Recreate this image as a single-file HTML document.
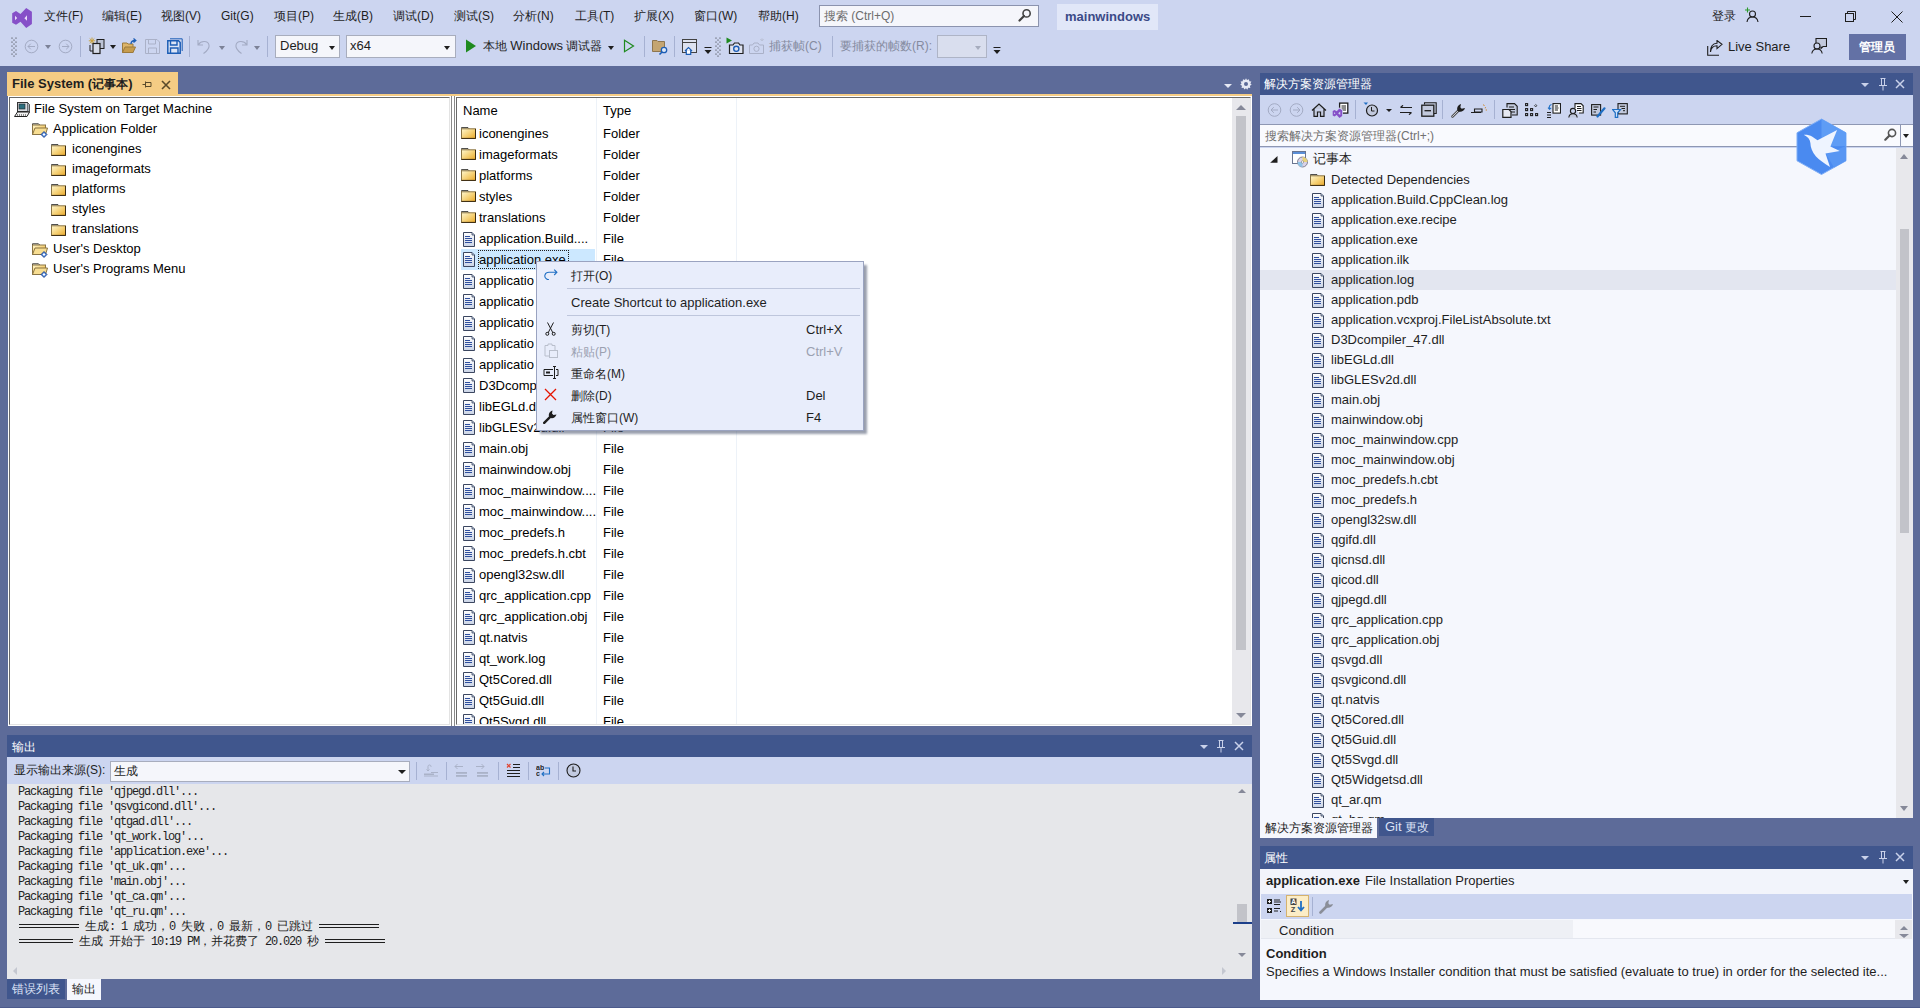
<!DOCTYPE html>
<html><head><meta charset="utf-8">
<style>
*{margin:0;padding:0;box-sizing:border-box}
html,body{width:1920px;height:1008px;overflow:hidden;background:#5D6B99;font-family:"Liberation Sans",sans-serif;font-size:13px;color:#1E1E1E}
.a{position:absolute}
.t{position:absolute;white-space:nowrap;line-height:16px}
#top{left:0;top:0;width:1920px;height:66px;background:#CCD5F0}
.menu{top:8px;font-size:12px;color:#1E1E1E}
.sep{position:absolute;width:1px;background:#A6B1D2;top:37px;height:20px}
.combo{position:absolute;background:#F5F6FB;border:1px solid #A8ADBD}
.dd{position:absolute;width:0;height:0;border-left:4px solid transparent;border-right:4px solid transparent;border-top:4px solid #1E1E1E}
.ttl{position:absolute;background:#40568D;color:#fff}
.tb{position:absolute;background:#CCD5F0}
.sunk{position:absolute;background:#fff;border:1px solid #fff}
.sunk>.in{color:#000;position:absolute;left:0;top:0;right:0;bottom:0;border-top:1px solid #696969;border-left:1px solid #696969;border-right:1px solid #E3E3E3;border-bottom:1px solid #E3E3E3;overflow:hidden}
.sb{position:absolute;background:#E8E8EC}
.thumb{position:absolute;background:#C2C3C9}
.upar{position:absolute;width:0;height:0;border-left:5px solid transparent;border-right:5px solid transparent;border-bottom:5px solid #868999}
.dnar{position:absolute;width:0;height:0;border-left:5px solid transparent;border-right:5px solid transparent;border-top:5px solid #868999}
.row{position:absolute;height:21px;white-space:nowrap}
.mono{font-family:"Liberation Mono",monospace;font-size:12px;letter-spacing:-1.2px;line-height:15px;color:#1E1E1E}
.fi{position:absolute;width:13px;height:16px}
</style></head><body>
<svg width="0" height="0" style="position:absolute"><defs>
<linearGradient id="gf" x1="0" y1="0" x2="1" y2="1"><stop offset="0" stop-color="#FFF8D0"/><stop offset=".55" stop-color="#F5CF72"/><stop offset="1" stop-color="#E9A82A"/></linearGradient>
<linearGradient id="gd" x1="0" y1="0" x2="0" y2="1"><stop offset="0" stop-color="#FFFFFF"/><stop offset="1" stop-color="#C9D3E6"/></linearGradient>
<symbol id="ifile" viewBox="0 0 12 15"><path d="M0.5 0.5 H9 L11.5 3 V14.5 H0.5 Z" fill="url(#gd)" stroke="#3B4660"/><path d="M9 0.5 V3 H11.5" fill="#B7C3DA" stroke="#3B4660" stroke-width=".8"/><g fill="#2F4F9E"><rect x="2" y="4" width="5" height="1"/><rect x="2" y="6" width="7" height="1"/><rect x="2" y="8" width="7" height="1"/><rect x="2" y="10" width="7" height="1"/></g></symbol>
<symbol id="ifold" viewBox="0 0 15 12"><path d="M0.5 1.8 V0.6 H7 L8.2 1.8" fill="#F1EDD8" stroke="#2A2A2A" stroke-width=".9"/><rect x="0.5" y="1.8" width="14" height="9.7" fill="url(#gf)" stroke="#8A7444"/><path d="M0.5 11.4 H14.5 V2" fill="none" stroke="#3A2A10" stroke-width="1"/></symbol>
<symbol id="isfold" viewBox="0 0 17 15"><path d="M0.5 2 V0.8 H6.5 L7.7 2" fill="#F1EDD8" stroke="#2A2A2A" stroke-width=".9"/><rect x="0.5" y="2" width="13" height="9.5" fill="url(#gf)" stroke="#8A7444"/><path d="M0.5 11.5 L3 5 H15.5 L13.5 11.5 Z" fill="#F8DE92" stroke="#8A7444"/><path d="M12 8.5 L15 11.5 L12 14.5 L9 11.5 Z" fill="#3D7BD8" stroke="#1E3F86" stroke-width=".8"/><path d="M12 10 L13.5 11.5 L12 13 L10.5 11.5 Z" fill="#fff"/></symbol>
</defs></svg>
<!-- TOP BARS -->
<div id="top" class="a">
 <svg class="a" style="left:12px;top:8px" width="20" height="20" viewBox="0 0 20 20"><path d="M0.2 5.2 L4 3.1 L8.5 6 L14.2 0 L19.9 3.8 L19.9 16 L14.2 19.9 L8.5 13.8 L4 16.7 L0.2 14.8 Z" fill="#8650C8"/><path d="M3 7.8 L5.2 10 L3 12.2 Z" fill="#EBDDFB"/><path d="M15 7.2 L12.4 10.2 L15 12.7 Z" fill="#EBDDFB"/></svg>
 <div class="t menu" style="left:44px">文件(F)</div>
 <div class="t menu" style="left:102px">编辑(E)</div>
 <div class="t menu" style="left:161px">视图(V)</div>
 <div class="t menu" style="left:221px">Git(G)</div>
 <div class="t menu" style="left:274px">项目(P)</div>
 <div class="t menu" style="left:333px">生成(B)</div>
 <div class="t menu" style="left:393px">调试(D)</div>
 <div class="t menu" style="left:454px">测试(S)</div>
 <div class="t menu" style="left:513px">分析(N)</div>
 <div class="t menu" style="left:575px">工具(T)</div>
 <div class="t menu" style="left:634px">扩展(X)</div>
 <div class="t menu" style="left:694px">窗口(W)</div>
 <div class="t menu" style="left:758px">帮助(H)</div>
 <div class="a" style="left:819px;top:5px;width:220px;height:22px;background:#F5F6FB;border:1px solid #8B93AE"></div>
 <div class="t" style="left:824px;top:8px;color:#6D6D6D;font-size:12px">搜索 (Ctrl+Q)</div>
 <svg class="a" style="left:1018px;top:8px" width="14" height="14" viewBox="0 0 14 14"><circle cx="8.6" cy="5.4" r="3.6" fill="none" stroke="#424242" stroke-width="1.6"/><path d="M6 8 L1.5 12.5" stroke="#424242" stroke-width="2.2" stroke-linecap="round"/></svg>
 <div class="a" style="left:1057px;top:4px;width:101px;height:26px;background:#E1E7F8"></div>
 <div class="t" style="left:1065px;top:9px;font-weight:bold;color:#3B4A87;font-size:13px">mainwindows</div>
 <div class="t" style="left:1712px;top:8px;font-size:12px">登录</div>
 <svg class="a" style="left:1744px;top:7px" width="16" height="16" viewBox="0 0 16 16"><path d="M3.5 0.5 V5.5 M1 3 H6" stroke="#2B9A2B" stroke-width="1.1"/><circle cx="8.5" cy="7" r="3" fill="none" stroke="#1E1E1E" stroke-width="1.1"/><path d="M3 15 C3.5 11.5 5.5 10 8.5 10 C11.5 10 13.5 11.5 14 15" fill="none" stroke="#1E1E1E" stroke-width="1.1"/></svg>
 <div class="a" style="left:1800px;top:16px;width:11px;height:1px;background:#1E1E1E"></div>
 <svg class="a" style="left:1845px;top:11px" width="12" height="12" viewBox="0 0 12 12"><rect x="0.5" y="2.5" width="8" height="8" fill="none" stroke="#1E1E1E"/><path d="M2.5 2.5 V0.5 H10.5 V8.5 H8.5" fill="none" stroke="#1E1E1E"/></svg>
 <svg class="a" style="left:1891px;top:11px" width="12" height="12" viewBox="0 0 12 12"><path d="M0.5 0.5 L11.5 11.5 M11.5 0.5 L0.5 11.5" stroke="#1E1E1E" stroke-width="1"/></svg>

 <svg class="a" style="left:11px;top:37px" width="6" height="20" viewBox="0 0 6 20"><g fill="#1E1E1E"><circle cx="1" cy="1" r=".6"/><circle cx="5" cy="1" r=".6"/><circle cx="3" cy="3" r=".6"/><circle cx="1" cy="5" r=".6"/><circle cx="5" cy="5" r=".6"/><circle cx="3" cy="7" r=".6"/><circle cx="1" cy="9" r=".6"/><circle cx="5" cy="9" r=".6"/><circle cx="3" cy="11" r=".6"/><circle cx="1" cy="13" r=".6"/><circle cx="5" cy="13" r=".6"/><circle cx="3" cy="15" r=".6"/><circle cx="1" cy="17" r=".6"/><circle cx="5" cy="17" r=".6"/><circle cx="3" cy="19" r=".6"/></g></svg>
 <svg class="a" style="left:24px;top:39px" width="15" height="15" viewBox="0 0 15 15"><circle cx="7.5" cy="7.5" r="6.3" fill="none" stroke="#A3ABC4" stroke-width="1"/><path d="M11 7.5 H4 M6.8 4.7 L4 7.5 L6.8 10.3" fill="none" stroke="#A3ABC4" stroke-width="1"/></svg>
 <div class="dd" style="left:45px;top:45px;border-top-color:#7C8297;border-left-width:3.5px;border-right-width:3.5px"></div>
 <svg class="a" style="left:58px;top:39px" width="15" height="15" viewBox="0 0 15 15"><circle cx="7.5" cy="7.5" r="6.3" fill="none" stroke="#A3ABC4" stroke-width="1"/><path d="M4 7.5 H11 M8.2 4.7 L11 7.5 L8.2 10.3" fill="none" stroke="#A3ABC4" stroke-width="1"/></svg>
 <div class="sep" style="left:80px;top:36px;height:21px"></div>
 <svg class="a" style="left:88px;top:37px" width="18" height="18" viewBox="0 0 18 18"><g stroke="#C8A13E" stroke-width="1"><path d="M4 0.5 V7 M0.8 3.8 H7.2 M1.7 1.5 L6.3 6.1 M6.3 1.5 L1.7 6.1"/></g><rect x="9" y="2.5" width="7" height="9" fill="#BCC3D6" stroke="#1E1E1E" stroke-width="1"/><rect x="5" y="6.5" width="7" height="10" fill="#D6DBE8" stroke="#1E1E1E" stroke-width="1.2"/><path d="M2 8 V14 H5" fill="none" stroke="#1E1E1E"/></svg>
 <div class="dd" style="left:110px;top:45px;border-left-width:3.5px;border-right-width:3.5px"></div>
 <svg class="a" style="left:122px;top:38px" width="17" height="16" viewBox="0 0 17 16"><path d="M0.5 5 H5 L6 6 H11 V14.5 H0.5 Z" fill="#DDB469" stroke="#9C7A3C"/><path d="M0.5 14.5 L3 9 H13.5 L11 14.5 Z" fill="#C69C4E" stroke="#9C7A3C"/><path d="M9 6 C9 3.5 10.5 2.5 13 2.5 M11.5 0.5 L13.8 2.5 L11.5 4.5" fill="none" stroke="#1C5DB5" stroke-width="1.3"/></svg>
 <svg class="a" style="left:145px;top:39px" width="15" height="15" viewBox="0 0 15 15"><path d="M0.5 0.5 H12 L14.5 3 V14.5 H0.5 Z" fill="none" stroke="#AAB1C8"/><path d="M3.5 0.5 V5 H10.5 V0.5 M3.5 14.5 V9 H11.5 V14.5" fill="none" stroke="#AAB1C8"/></svg>
 <svg class="a" style="left:167px;top:38px" width="16" height="16" viewBox="0 0 16 16"><path d="M3 0.8 H15.2 V13" fill="none" stroke="#1C5DB5" stroke-width="1"/><path d="M0.8 2.8 H11.5 L13.2 4.5 V15.2 H0.8 Z" fill="#DCE5F6" stroke="#1C5DB5" stroke-width="1.5"/><path d="M3.5 2.8 V7 H10 V2.8 M3.5 15 V10 H11 V15" fill="none" stroke="#1C5DB5" stroke-width="1.4"/></svg>
 <div class="sep" style="left:189px;top:36px;height:21px"></div>
 <svg class="a" style="left:197px;top:39px" width="16" height="16" viewBox="0 0 16 16"><path d="M1 1 V6 H6 M1.5 5.5 C4 1.5 11 1.5 12 6 C12.8 9.5 10 12 6.5 14.5" fill="none" stroke="#A3ABC4" stroke-width="1.1"/></svg>
 <div class="dd" style="left:219px;top:46px;border-top-color:#7C8297;border-left-width:3.5px;border-right-width:3.5px"></div>
 <svg class="a" style="left:232px;top:39px" width="16" height="16" viewBox="0 0 16 16"><path d="M15 1 V6 H10 M14.5 5.5 C12 1.5 5 1.5 4 6 C3.2 9.5 6 12 9.5 14.5" fill="none" stroke="#A3ABC4" stroke-width="1.1"/></svg>
 <div class="dd" style="left:254px;top:46px;border-top-color:#7C8297;border-left-width:3.5px;border-right-width:3.5px"></div>
 <div class="sep" style="left:267px;top:36px;height:21px"></div>
 <div class="combo" style="left:275px;top:35px;width:65px;height:23px"></div>
 <div class="t" style="left:280px;top:38px;font-size:13px">Debug</div>
 <div class="dd" style="left:329px;top:46px;border-left-width:3.5px;border-right-width:3.5px"></div>
 <div class="combo" style="left:346px;top:35px;width:110px;height:23px"></div>
 <div class="t" style="left:350px;top:38px;font-size:13px">x64</div>
 <div class="dd" style="left:444px;top:46px;border-left-width:3.5px;border-right-width:3.5px"></div>
 <svg class="a" style="left:465px;top:39px" width="12" height="14" viewBox="0 0 12 14"><path d="M1 0.5 L11 7 L1 13.5 Z" fill="#1E8A1E"/></svg>
 <div class="t" style="left:483px;top:38px;font-size:12px">本地 <span style="font-size:13px">Windows</span> 调试器</div>
 <div class="dd" style="left:608px;top:46px;border-left-width:3.5px;border-right-width:3.5px"></div>
 <svg class="a" style="left:623px;top:39px" width="12" height="14" viewBox="0 0 12 14"><path d="M1.5 1.3 L10.5 7 L1.5 12.7 Z" fill="none" stroke="#1E8A1E" stroke-width="1.2"/></svg>
 <div class="sep" style="left:644px;top:36px;height:21px"></div>
 <svg class="a" style="left:652px;top:39px" width="17" height="16" viewBox="0 0 17 16"><path d="M0.5 1.5 H5 L6 2.5 H12.5 V12.5 H0.5 Z" fill="#C4A572" stroke="#8E7650"/><circle cx="12" cy="11" r="2.7" fill="#DCE8F8" stroke="#1C5DB5" stroke-width="1.3"/><path d="M10 13 L7.5 15.5" stroke="#1C5DB5" stroke-width="1.6"/></svg>
 <div class="sep" style="left:674px;top:36px;height:21px"></div>
 <svg class="a" style="left:682px;top:39px" width="16" height="16" viewBox="0 0 16 16"><rect x="0.5" y="0.5" width="14" height="13" fill="#DDE2F0" stroke="#424242"/><path d="M0.5 3.5 H14.5" stroke="#424242"/><path d="M3 12 L6.5 8.5 L10 12 M4.3 11 V15.3 H8.7 V11" fill="#fff" stroke="#1C5DB5" stroke-width="1.2"/></svg>
 <svg class="a" style="left:704px;top:47px" width="8" height="8" viewBox="0 0 8 8"><path d="M0.5 0.5 H7.5" stroke="#1E1E1E"/><path d="M0.5 3 H7.5 L4 7 Z" fill="#1E1E1E"/></svg>
 <svg class="a" style="left:715px;top:37px" width="6" height="20" viewBox="0 0 6 20"><g fill="#1E1E1E"><circle cx="1" cy="1" r=".6"/><circle cx="5" cy="1" r=".6"/><circle cx="3" cy="3" r=".6"/><circle cx="1" cy="5" r=".6"/><circle cx="5" cy="5" r=".6"/><circle cx="3" cy="7" r=".6"/><circle cx="1" cy="9" r=".6"/><circle cx="5" cy="9" r=".6"/><circle cx="3" cy="11" r=".6"/><circle cx="1" cy="13" r=".6"/><circle cx="5" cy="13" r=".6"/><circle cx="3" cy="15" r=".6"/><circle cx="1" cy="17" r=".6"/><circle cx="5" cy="17" r=".6"/><circle cx="3" cy="19" r=".6"/></g></svg>
 <svg class="a" style="left:726px;top:37px" width="18" height="18" viewBox="0 0 18 18"><path d="M0.5 0.5 L6 3.5 L0.5 6.5 Z" fill="#1E8A1E"/><path d="M3.5 8 H7 L8.5 6 H12.5 L14 8 H17 V16.5 H3.5 Z" fill="#DDE2F0" stroke="#1E1E1E" stroke-width="1.2"/><circle cx="10.3" cy="11.8" r="2.6" fill="none" stroke="#1C5DB5" stroke-width="1.4"/></svg>
 <svg class="a" style="left:749px;top:38px" width="16" height="17" viewBox="0 0 16 17"><path d="M13 0.5 V3 M11.5 1.5 L12.2 2.3 M14.5 1.5 L13.8 2.3" stroke="#B2B8CA"/><path d="M0.5 7 H3.5 L5 5 H9 L10.5 7 H14.5 V15.5 H0.5 Z" fill="none" stroke="#AAB1C8"/><circle cx="7.5" cy="10.8" r="2.6" fill="none" stroke="#AAB1C8"/></svg>
 <div class="t" style="left:769px;top:38px;font-size:12px;color:#858B9F">捕获帧(C)</div>
 <div class="sep" style="left:832px;top:36px;height:21px"></div>
 <div class="t" style="left:840px;top:38px;font-size:12px;color:#858B9F">要捕获的帧数(R):</div>
 <div class="combo" style="left:937px;top:35px;width:50px;height:23px;background:#D9DEEE;border-color:#AEB4C6"></div>
 <div class="dd" style="left:975px;top:46px;border-top-color:#A6ACBE;border-left-width:3.5px;border-right-width:3.5px"></div>
 <svg class="a" style="left:993px;top:47px" width="8" height="8" viewBox="0 0 8 8"><path d="M0.5 0.5 H7.5" stroke="#1E1E1E"/><path d="M0.5 3 H7.5 L4 7 Z" fill="#1E1E1E"/></svg>
 <svg class="a" style="left:1707px;top:40px" width="16" height="16" viewBox="0 0 16 16"><path d="M0.7 6 V15.3 H12" fill="none" stroke="#1E1E1E" stroke-width="1.1"/><path d="M3.5 12 C4 7.5 6.5 5.8 10 5.8 V8.6 L15 4.3 L10 0.5 V3.2 C5.5 3.2 3.3 7 3.5 12 Z" fill="none" stroke="#1E1E1E" stroke-width="1.1"/></svg>
 <div class="t" style="left:1728px;top:39px;font-size:13px">Live Share</div>
 <svg class="a" style="left:1811px;top:38px" width="16" height="16" viewBox="0 0 16 16"><path d="M5 5.5 V0.5 H15.5 V8.5 H12 L10 10.5 V8.5" fill="#C2C9DD" stroke="#1E1E1E" stroke-width="1.1"/><circle cx="6" cy="8" r="3" fill="#CCD5F0" stroke="#1E1E1E" stroke-width="1.1"/><path d="M0.8 15.5 C1.3 12.5 3.3 11 6 11 C8.7 11 10.7 12.5 11.2 15.5" fill="none" stroke="#1E1E1E" stroke-width="1.1"/></svg>
 <div class="a" style="left:1849px;top:34px;width:57px;height:26px;background:#6371A5"></div>
 <div class="t" style="left:1859px;top:39px;font-size:12px;color:#fff;font-weight:bold">管理员</div>
</div>

<!-- DOCUMENT TAB -->
<div class="a" style="left:7px;top:72px;width:171px;height:24px;background:#F5CC84"></div>
<div class="t" style="left:12px;top:76px;font-weight:bold;font-size:13px;color:#1E1E1E">File System (<span style="font-size:12px">记事本</span>)</div>
<svg class="a" style="left:142px;top:80px" width="10" height="9" viewBox="0 0 10 9"><path d="M0.5 4.5 H3.5 M3.5 1.5 V7.5 M3.5 2.5 H9 V6.5 H3.5" fill="none" stroke="#5A4A2A" stroke-width="1"/></svg>
<svg class="a" style="left:161px;top:80px" width="10" height="10" viewBox="0 0 10 10"><path d="M1 1 L9 9 M9 1 L1 9" stroke="#5A4A2A" stroke-width="1.6"/></svg>
<div class="a" style="left:7px;top:94px;width:1245px;height:2px;background:#F5CC84"></div>
<div class="dd" style="left:1224px;top:84px;border-top-color:#E6E9F4;border-left-width:4px;border-right-width:4px;border-top-width:4px"></div>
<svg class="a" style="left:1240px;top:78px" width="12" height="12" viewBox="0 0 12 12"><path d="M6 0.3 L7 2 L9 1.3 L9.3 3.2 L11.4 3.6 L10.4 5.5 L11.7 6.8 L9.9 7.8 L10.3 9.9 L8.2 9.8 L7.3 11.7 L6 10.2 L4.3 11.6 L3.6 9.7 L1.5 9.9 L2 7.8 L0.2 6.8 L1.5 5.5 L0.6 3.6 L2.7 3.2 L3 1.3 L5 2 Z" fill="#E6E9F4"/><circle cx="6" cy="6" r="2" fill="#5D6B99"/></svg>
<div class="a" style="left:451px;top:96px;width:4px;height:630px;background:#fff;border-left:1px solid #8A8A8A;border-right:1px solid #8A8A8A"></div>
<div class="sunk" style="left:8px;top:96px;width:443px;height:630px"><div class="in">
<svg class="a" style="left:4px;top:4px" width="16" height="15" viewBox="0 0 16 15"><rect x="3.5" y="0.5" width="10" height="9" fill="#D8DCE2" stroke="#333"/><rect x="5" y="2" width="6" height="5" fill="#2C6E7E" stroke="#222" stroke-width=".6"/><path d="M13.5 0.5 L15.5 2.5 V10 L13.5 9.5" fill="#A9B0B8" stroke="#333" stroke-width=".8"/><path d="M0.5 14.5 L3.5 10 H15.5 L13 14.5 Z" fill="#F2F2F2" stroke="#222"/><path d="M3 13 H12" stroke="#222" stroke-dasharray="1 1"/></svg>
<div class="t" style="left:24px;top:3px">File System on Target Machine</div>
<svg class="a" style="left:22px;top:25px" width="17" height="15"><use href="#isfold"/></svg>
<div class="t" style="left:43px;top:23px">Application Folder</div>
<svg class="a" style="left:41px;top:46px" width="15" height="12"><use href="#ifold"/></svg>
<div class="t" style="left:62px;top:43px">iconengines</div>
<svg class="a" style="left:41px;top:66px" width="15" height="12"><use href="#ifold"/></svg>
<div class="t" style="left:62px;top:63px">imageformats</div>
<svg class="a" style="left:41px;top:86px" width="15" height="12"><use href="#ifold"/></svg>
<div class="t" style="left:62px;top:83px">platforms</div>
<svg class="a" style="left:41px;top:106px" width="15" height="12"><use href="#ifold"/></svg>
<div class="t" style="left:62px;top:103px">styles</div>
<svg class="a" style="left:41px;top:126px" width="15" height="12"><use href="#ifold"/></svg>
<div class="t" style="left:62px;top:123px">translations</div>
<svg class="a" style="left:22px;top:145px" width="17" height="15"><use href="#isfold"/></svg>
<div class="t" style="left:43px;top:143px">User's Desktop</div>
<svg class="a" style="left:22px;top:165px" width="17" height="15"><use href="#isfold"/></svg>
<div class="t" style="left:43px;top:163px">User's Programs Menu</div>
</div></div>
<div class="sunk" style="left:455px;top:96px;width:797px;height:630px"><div class="in">
<div class="a" style="left:139px;top:0px;width:1px;height:640px;background:#EDF2F8"></div>
<div class="a" style="left:279px;top:0px;width:1px;height:640px;background:#EDF2F8"></div>
<div class="t" style="left:6px;top:5px">Name</div>
<div class="t" style="left:146px;top:5px">Type</div>
<svg class="a" style="left:4px;top:29px" width="15" height="12"><use href="#ifold"/></svg>
<div class="t" style="left:22px;top:28px">iconengines</div>
<div class="t" style="left:146px;top:28px">Folder</div>
<svg class="a" style="left:4px;top:50px" width="15" height="12"><use href="#ifold"/></svg>
<div class="t" style="left:22px;top:49px">imageformats</div>
<div class="t" style="left:146px;top:49px">Folder</div>
<svg class="a" style="left:4px;top:71px" width="15" height="12"><use href="#ifold"/></svg>
<div class="t" style="left:22px;top:70px">platforms</div>
<div class="t" style="left:146px;top:70px">Folder</div>
<svg class="a" style="left:4px;top:92px" width="15" height="12"><use href="#ifold"/></svg>
<div class="t" style="left:22px;top:91px">styles</div>
<div class="t" style="left:146px;top:91px">Folder</div>
<svg class="a" style="left:4px;top:113px" width="15" height="12"><use href="#ifold"/></svg>
<div class="t" style="left:22px;top:112px">translations</div>
<div class="t" style="left:146px;top:112px">Folder</div>
<svg class="a" style="left:6px;top:134px" width="12" height="15"><use href="#ifile"/></svg>
<div class="t" style="left:22px;top:133px">application.Build....</div>
<div class="t" style="left:146px;top:133px">File</div>
<div class="a" style="left:4px;top:151px;width:134px;height:21px;background:#CCE8FF"></div>
<div class="a" style="left:21px;top:152px;width:91px;height:19px;border:1px dotted #1E1E1E"></div>
<svg class="a" style="left:6px;top:154px" width="12" height="15"><use href="#ifile"/></svg>
<div class="t" style="left:22px;top:154px">application.exe</div>
<div class="t" style="left:146px;top:154px">File</div>
<svg class="a" style="left:6px;top:176px" width="12" height="15"><use href="#ifile"/></svg>
<div class="t" style="left:22px;top:175px">applicatio</div>
<div class="t" style="left:146px;top:175px">File</div>
<svg class="a" style="left:6px;top:196px" width="12" height="15"><use href="#ifile"/></svg>
<div class="t" style="left:22px;top:196px">applicatio</div>
<div class="t" style="left:146px;top:196px">File</div>
<svg class="a" style="left:6px;top:218px" width="12" height="15"><use href="#ifile"/></svg>
<div class="t" style="left:22px;top:217px">applicatio</div>
<div class="t" style="left:146px;top:217px">File</div>
<svg class="a" style="left:6px;top:238px" width="12" height="15"><use href="#ifile"/></svg>
<div class="t" style="left:22px;top:238px">applicatio</div>
<div class="t" style="left:146px;top:238px">File</div>
<svg class="a" style="left:6px;top:260px" width="12" height="15"><use href="#ifile"/></svg>
<div class="t" style="left:22px;top:259px">applicatio</div>
<div class="t" style="left:146px;top:259px">File</div>
<svg class="a" style="left:6px;top:280px" width="12" height="15"><use href="#ifile"/></svg>
<div class="t" style="left:22px;top:280px">D3Dcomp</div>
<div class="t" style="left:146px;top:280px">File</div>
<svg class="a" style="left:6px;top:302px" width="12" height="15"><use href="#ifile"/></svg>
<div class="t" style="left:22px;top:301px">libEGLd.dl</div>
<div class="t" style="left:146px;top:301px">File</div>
<svg class="a" style="left:6px;top:322px" width="12" height="15"><use href="#ifile"/></svg>
<div class="t" style="left:22px;top:322px">libGLESv2d.dll</div>
<div class="t" style="left:146px;top:322px">File</div>
<svg class="a" style="left:6px;top:344px" width="12" height="15"><use href="#ifile"/></svg>
<div class="t" style="left:22px;top:343px">main.obj</div>
<div class="t" style="left:146px;top:343px">File</div>
<svg class="a" style="left:6px;top:364px" width="12" height="15"><use href="#ifile"/></svg>
<div class="t" style="left:22px;top:364px">mainwindow.obj</div>
<div class="t" style="left:146px;top:364px">File</div>
<svg class="a" style="left:6px;top:386px" width="12" height="15"><use href="#ifile"/></svg>
<div class="t" style="left:22px;top:385px">moc_mainwindow....</div>
<div class="t" style="left:146px;top:385px">File</div>
<svg class="a" style="left:6px;top:406px" width="12" height="15"><use href="#ifile"/></svg>
<div class="t" style="left:22px;top:406px">moc_mainwindow....</div>
<div class="t" style="left:146px;top:406px">File</div>
<svg class="a" style="left:6px;top:428px" width="12" height="15"><use href="#ifile"/></svg>
<div class="t" style="left:22px;top:427px">moc_predefs.h</div>
<div class="t" style="left:146px;top:427px">File</div>
<svg class="a" style="left:6px;top:448px" width="12" height="15"><use href="#ifile"/></svg>
<div class="t" style="left:22px;top:448px">moc_predefs.h.cbt</div>
<div class="t" style="left:146px;top:448px">File</div>
<svg class="a" style="left:6px;top:470px" width="12" height="15"><use href="#ifile"/></svg>
<div class="t" style="left:22px;top:469px">opengl32sw.dll</div>
<div class="t" style="left:146px;top:469px">File</div>
<svg class="a" style="left:6px;top:490px" width="12" height="15"><use href="#ifile"/></svg>
<div class="t" style="left:22px;top:490px">qrc_application.cpp</div>
<div class="t" style="left:146px;top:490px">File</div>
<svg class="a" style="left:6px;top:512px" width="12" height="15"><use href="#ifile"/></svg>
<div class="t" style="left:22px;top:511px">qrc_application.obj</div>
<div class="t" style="left:146px;top:511px">File</div>
<svg class="a" style="left:6px;top:532px" width="12" height="15"><use href="#ifile"/></svg>
<div class="t" style="left:22px;top:532px">qt.natvis</div>
<div class="t" style="left:146px;top:532px">File</div>
<svg class="a" style="left:6px;top:554px" width="12" height="15"><use href="#ifile"/></svg>
<div class="t" style="left:22px;top:553px">qt_work.log</div>
<div class="t" style="left:146px;top:553px">File</div>
<svg class="a" style="left:6px;top:574px" width="12" height="15"><use href="#ifile"/></svg>
<div class="t" style="left:22px;top:574px">Qt5Cored.dll</div>
<div class="t" style="left:146px;top:574px">File</div>
<svg class="a" style="left:6px;top:596px" width="12" height="15"><use href="#ifile"/></svg>
<div class="t" style="left:22px;top:595px">Qt5Guid.dll</div>
<div class="t" style="left:146px;top:595px">File</div>
<svg class="a" style="left:6px;top:616px" width="12" height="15"><use href="#ifile"/></svg>
<div class="t" style="left:22px;top:616px">Qt5Svgd.dll</div>
<div class="t" style="left:146px;top:616px">File</div>
<div class="sb" style="left:775px;top:0px;width:18px;height:628px"></div>
<div class="thumb" style="left:779px;top:18px;width:10px;height:534px"></div>
<div class="upar" style="left:779px;top:7px"></div>
<div class="dnar" style="left:779px;top:615px"></div>
</div></div>
<!-- OUTPUT -->
<div class="ttl" style="left:7px;top:735px;width:1245px;height:22px"></div>
<div class="t" style="left:12px;top:739px;font-size:12px;color:#fff">输出</div>
<div class="dd" style="left:1200px;top:745px;border-top-color:#C9D1EA;border-left-width:4px;border-right-width:4px;border-top-width:4px"></div>
<svg class="a" style="left:1216px;top:740px" width="10" height="13" viewBox="0 0 10 13"><path d="M2.5 0.5 H7.5 M3.5 0.5 V7 M6.5 0.5 V7 M1 7.5 H9 M5 7.5 V12.5" fill="none" stroke="#C9D1EA" stroke-width="1"/></svg>
<svg class="a" style="left:1234px;top:741px" width="10" height="10" viewBox="0 0 10 10"><path d="M1 1 L9 9 M9 1 L1 9" stroke="#C9D1EA" stroke-width="1.5"/></svg>
<div class="tb" style="left:7px;top:757px;width:1245px;height:27px"></div>
<div class="t" style="left:14px;top:762px;font-size:12px">显示输出来源(S):</div>
<div class="combo" style="left:110px;top:761px;width:300px;height:21px"></div>
<div class="t" style="left:114px;top:763px;font-size:12px">生成</div>
<div class="dd" style="left:398px;top:770px;border-left-width:4px;border-right-width:4px;border-top-width:4px"></div>
<div class="a" style="left:416px;top:762px;width:1px;height:18px;background:#A6B1D2"></div>
<div class="a" style="left:446px;top:762px;width:1px;height:18px;background:#A6B1D2"></div>
<div class="a" style="left:498px;top:762px;width:1px;height:18px;background:#A6B1D2"></div>
<div class="a" style="left:528px;top:762px;width:1px;height:18px;background:#A6B1D2"></div>
<div class="a" style="left:558px;top:762px;width:1px;height:18px;background:#A6B1D2"></div>
<svg class="a" style="left:424px;top:763px" width="14" height="14" viewBox="0 0 14 14"><path d="M4 8 V3.5 C4 1.5 7 1.5 7 3.5 V4" fill="none" stroke="#AAB2C8"/><path d="M2.5 6.5 L4 8 L5.5 6.5" fill="none" stroke="#AAB2C8"/><path d="M7 9.5 H14 M0 13 H14" stroke="#AAB2C8"/><rect x="0" y="10.5" width="10" height="1.5" fill="#AAB2C8"/></svg>
<svg class="a" style="left:453px;top:764px" width="36" height="14" viewBox="0 0 36 14"><path d="M2 2.5 H10 M4.5 0 L2 2.5 L4.5 5 M23 2.5 H31 M28.5 0 L31 2.5 L28.5 5" fill="none" stroke="#AAB2C8"/><rect x="3" y="8" width="11" height="1.8" fill="#AAB2C8"/><rect x="3" y="11" width="11" height="1.8" fill="#AAB2C8"/><rect x="24" y="8" width="11" height="1.8" fill="#AAB2C8"/><rect x="24" y="11" width="11" height="1.8" fill="#AAB2C8"/></svg>
<svg class="a" style="left:506px;top:763px" width="15" height="14" viewBox="0 0 15 14"><path d="M1 1 L4.5 4.5 M4.5 1 L1 4.5" stroke="#E0432F" stroke-width="1.2"/><path d="M7 1.5 H14 M7 4.5 H14 M1 7.5 H14 M1 10.5 H14 M1 13.5 H14" stroke="#1E1E1E" stroke-width="1.1"/></svg>
<svg class="a" style="left:536px;top:764px" width="15" height="13" viewBox="0 0 15 13"><text x="0" y="5.5" font-size="7" font-family="Liberation Sans" font-weight="bold" fill="#1E1E1E">ab</text><text x="0" y="11.5" font-size="7" font-family="Liberation Sans" font-weight="bold" fill="#1E1E1E">c</text><path d="M9 4 H13.5 V10 H6 M8 8 L6 10 L8 12" fill="none" stroke="#1F6FC4" stroke-width="1.1"/></svg>
<svg class="a" style="left:566px;top:763px" width="15" height="15" viewBox="0 0 15 15"><circle cx="7.5" cy="7.5" r="6.5" fill="#C2CAE0" stroke="#1E1E1E" stroke-width="1.1"/><path d="M7 3.5 V8 H10" fill="none" stroke="#1E1E1E" stroke-width="1.1"/></svg>
<div class="a" style="left:7px;top:784px;width:1245px;height:195px;background:#E6E7EA"></div>
<div class="t mono" style="left:18px;top:785px">Packaging file 'qjpegd.dll'...</div>
<div class="t mono" style="left:18px;top:800px">Packaging file 'qsvgicond.dll'...</div>
<div class="t mono" style="left:18px;top:815px">Packaging file 'qtgad.dll'...</div>
<div class="t mono" style="left:18px;top:830px">Packaging file 'qt_work.log'...</div>
<div class="t mono" style="left:18px;top:845px">Packaging file 'application.exe'...</div>
<div class="t mono" style="left:18px;top:860px">Packaging file 'qt_uk.qm'...</div>
<div class="t mono" style="left:18px;top:875px">Packaging file 'main.obj'...</div>
<div class="t mono" style="left:18px;top:890px">Packaging file 'qt_ca.qm'...</div>
<div class="t mono" style="left:18px;top:905px">Packaging file 'qt_ru.qm'...</div>
<div class="a" style="left:19px;top:924px;width:60px;height:4px;border-top:1px solid #1E1E1E;border-bottom:1px solid #1E1E1E"></div>
<div class="a" style="left:319px;top:924px;width:60px;height:4px;border-top:1px solid #1E1E1E;border-bottom:1px solid #1E1E1E"></div>
<div class="t mono" style="left:85px;top:920px"><span style="letter-spacing:0">生</span><span style="letter-spacing:0">成</span>: 1 <span style="letter-spacing:0">成</span><span style="letter-spacing:0">功</span><span style="letter-spacing:0">，</span>0 <span style="letter-spacing:0">失</span><span style="letter-spacing:0">败</span><span style="letter-spacing:0">，</span>0 <span style="letter-spacing:0">最</span><span style="letter-spacing:0">新</span><span style="letter-spacing:0">，</span>0 <span style="letter-spacing:0">已</span><span style="letter-spacing:0">跳</span><span style="letter-spacing:0">过</span></div>
<div class="a" style="left:19px;top:939px;width:54px;height:4px;border-top:1px solid #1E1E1E;border-bottom:1px solid #1E1E1E"></div>
<div class="a" style="left:325px;top:939px;width:60px;height:4px;border-top:1px solid #1E1E1E;border-bottom:1px solid #1E1E1E"></div>
<div class="t mono" style="left:79px;top:935px"><span style="letter-spacing:0">生</span><span style="letter-spacing:0">成</span> <span style="letter-spacing:0">开</span><span style="letter-spacing:0">始</span><span style="letter-spacing:0">于</span> 10:19 PM<span style="letter-spacing:0">，</span><span style="letter-spacing:0">并</span><span style="letter-spacing:0">花</span><span style="letter-spacing:0">费</span><span style="letter-spacing:0">了</span> 20.020 <span style="letter-spacing:0">秒</span></div>
<div class="upar" style="left:1238px;top:789px;border-left-width:4px;border-right-width:4px;border-bottom-width:4px"></div>
<div class="thumb" style="left:1237px;top:904px;width:10px;height:18px"></div>
<div class="a" style="left:1233px;top:922px;width:19px;height:2px;background:#1C3F8A"></div>
<div class="dnar" style="left:1238px;top:953px;border-left-width:4px;border-right-width:4px;border-top-width:4px"></div>
<div class="a" style="left:13px;top:967px;width:0;height:0;border-top:4px solid transparent;border-bottom:4px solid transparent;border-right:4px solid #C4C7D0"></div>
<div class="a" style="left:1222px;top:967px;width:0;height:0;border-top:4px solid transparent;border-bottom:4px solid transparent;border-left:4px solid #C4C7D0"></div>
<div class="a" style="left:7px;top:979px;width:58px;height:20px;background:#40568D"></div>
<div class="t" style="left:12px;top:981px;font-size:12px;color:#DCE3F7">错误列表</div>
<div class="a" style="left:67px;top:979px;width:34px;height:21px;background:#F5F7FD"></div>
<div class="t" style="left:72px;top:981px;font-size:12px;color:#1E1E1E">输出</div>
<div class="a" style="left:0;top:1007px;width:1920px;height:1px;background:#4C5A8C"></div>
<!-- SOLUTION EXPLORER -->
<div class="ttl" style="left:1260px;top:73px;width:653px;height:22px"></div>
<div class="t" style="left:1264px;top:76px;font-size:12px;color:#fff">解决方案资源管理器</div>
<div class="dd" style="left:1861px;top:83px;border-top-color:#C9D1EA;border-left-width:4px;border-right-width:4px;border-top-width:4px"></div>
<svg class="a" style="left:1878px;top:78px" width="10" height="13" viewBox="0 0 10 13"><path d="M2.5 0.5 H7.5 M3.5 0.5 V7 M6.5 0.5 V7 M1 7.5 H9 M5 7.5 V12.5" fill="none" stroke="#C9D1EA" stroke-width="1"/></svg>
<svg class="a" style="left:1895px;top:79px" width="10" height="10" viewBox="0 0 10 10"><path d="M1 1 L9 9 M9 1 L1 9" stroke="#C9D1EA" stroke-width="1.5"/></svg>
<div class="tb" style="left:1260px;top:95px;width:653px;height:29px"></div>
<svg class="a" style="left:1267px;top:103px" width="15" height="14" viewBox="0 0 15 14"><circle cx="7.5" cy="7" r="6.3" fill="none" stroke="#A3ABC4"/><path d="M11 7 H4 M6.8 4.2 L4 7 L6.8 9.8" fill="none" stroke="#A3ABC4"/></svg>
<svg class="a" style="left:1289px;top:103px" width="15" height="14" viewBox="0 0 15 14"><circle cx="7.5" cy="7" r="6.3" fill="none" stroke="#A3ABC4"/><path d="M4 7 H11 M8.2 4.2 L11 7 L8.2 9.8" fill="none" stroke="#A3ABC4"/></svg>
<svg class="a" style="left:1311px;top:103px" width="16" height="14" viewBox="0 0 16 14"><path d="M1 7.5 L8 1 L15 7.5 M3 6 V13.3 H6.5 V9 H9.5 V13.3 H13 V6" fill="#C2C9DD" stroke="#1E1E1E" stroke-width="1.2"/></svg>
<svg class="a" style="left:1332px;top:102px" width="17" height="16" viewBox="0 0 17 16"><rect x="7.6" y="1.1" width="8.2" height="10" fill="#fff" stroke="#1E1E1E" stroke-width="1.3"/><path d="M9.5 4 H14 M9.5 6 H14 M9.5 8 H14" stroke="#1E1E1E" stroke-width="1"/><g transform="translate(0.6 6.4) scale(0.48)"><path d="M0.2 5.2 L4 3.1 L8.5 6 L14.2 0 L19.9 3.8 L19.9 16 L14.2 19.9 L8.5 13.8 L4 16.7 L0.2 14.8 Z" fill="#CCD5F0" stroke="#CCD5F0" stroke-width="3"/><path d="M0.2 5.2 L4 3.1 L8.5 6 L14.2 0 L19.9 3.8 L19.9 16 L14.2 19.9 L8.5 13.8 L4 16.7 L0.2 14.8 Z" fill="#8650C8"/><path d="M3 7.8 L6 10 L3 12.2 Z M16 6.5 L11.5 10 L16 13.5 Z" fill="#CCD5F0"/></g></svg>
<div class="a" style="left:1355px;top:100px;width:1px;height:19px;background:#A6B1D2"></div>
<svg class="a" style="left:1363px;top:102px" width="16" height="15" viewBox="0 0 16 15"><path d="M0.5 0.5 H5 L3 3 Z" fill="#1F6FC4"/><circle cx="9" cy="8.5" r="5.5" fill="#C2C9DD" stroke="#1E1E1E" stroke-width="1.2"/><path d="M8.5 5 V9 H11.5" fill="none" stroke="#1E1E1E"/></svg>
<div class="dd" style="left:1386px;top:109px;border-left-width:3px;border-right-width:3px;border-top-width:3px"></div>
<svg class="a" style="left:1399px;top:105px" width="14" height="10" viewBox="0 0 14 10"><path d="M13 2.5 H1.5 M4 0.3 L1.5 2.5 M1 7.5 H12.5 M10 9.7 L12.5 7.5" fill="none" stroke="#1E1E1E" stroke-width="1.2"/></svg>
<svg class="a" style="left:1421px;top:102px" width="16" height="15" viewBox="0 0 16 15"><path d="M3.5 2.5 V0.8 H15.2 V11.5 H13" fill="#C2C9DD" stroke="#1E1E1E" stroke-width="1.1"/><rect x="0.8" y="3.2" width="12" height="11" fill="#C2C9DD" stroke="#1E1E1E" stroke-width="1.3"/><path d="M3.5 8.7 H10" stroke="#1E1E1E" stroke-width="1.3"/></svg>
<div class="a" style="left:1442px;top:100px;width:1px;height:19px;background:#A6B1D2"></div>
<svg class="a" style="left:1451px;top:103px" width="15" height="15" viewBox="0 0 15 15"><path d="M1.5 13.5 L7.5 7.5" stroke="#555" stroke-width="2.6" stroke-linecap="round"/><path d="M1.5 13.5 L7.5 7.5" stroke="#C9CCD6" stroke-width="1" stroke-linecap="round"/><path d="M6.8 8.2 C5.3 5.5 6.5 2 10 1 L9.3 4.3 L10.7 5.7 L14 5 C13 8.5 9.5 9.7 6.8 8.2 Z" fill="#1E1E1E"/></svg>
<svg class="a" style="left:1471px;top:104px" width="17" height="10" viewBox="0 0 17 10"><path d="M0 8.5 H10 M3.5 5 H11 V8 H3.5 Z" fill="none" stroke="#1E1E1E" stroke-width="1.1"/><path d="M12.5 0.5 L13.3 2 M15 3.5 L13.8 4 M16 6 H14.7" stroke="#D08A2A" stroke-width="1"/></svg>
<div class="a" style="left:1494px;top:100px;width:1px;height:19px;background:#A6B1D2"></div>
<svg class="a" style="left:1502px;top:103px" width="16" height="15" viewBox="0 0 16 15"><path d="M5 4.5 V0.6 H12.5 L15.2 3.3 V12 H10" fill="#C2C9DD" stroke="#1E1E1E" stroke-width="1.1"/><path d="M7 4 H12 M7 6.5 H13 M7 9 H13" stroke="#1E1E1E"/><path d="M0.8 6.5 H7 L9 8.5 V14.3 H0.8 Z" fill="#E6E9F2" stroke="#1E1E1E" stroke-width="1.2"/></svg>
<svg class="a" style="left:1525px;top:103px" width="14" height="14" viewBox="0 0 14 14"><g fill="none" stroke="#1E1E1E" stroke-width="1.1"><rect x="0.6" y="0.6" width="2" height="2"/><rect x="0.6" y="5.6" width="2" height="2"/><rect x="5.6" y="5.6" width="2" height="2"/><rect x="0.6" y="10.6" width="2" height="2"/><rect x="5.6" y="10.6" width="2" height="2"/><rect x="10.6" y="10.6" width="2" height="2"/></g><path d="M9.5 2.7 L10.7 1.5 L11.9 2.7 L10.7 3.9 Z" fill="none" stroke="#1E1E1E" stroke-width=".8"/></svg>
<svg class="a" style="left:1546px;top:103px" width="15" height="15" viewBox="0 0 15 15"><rect x="7" y="0.6" width="7.5" height="9.5" fill="#fff" stroke="#1E1E1E" stroke-width="1.1"/><path d="M8.8 3 H12 M8.8 5 H12.5 M8.8 7 H12" stroke="#1E1E1E"/><path d="M5.5 1.5 C3.5 2 3 4 3.5 6 M2 4.7 L3.5 6.3 L5.2 4.8" fill="none" stroke="#1F6FC4" stroke-width="1.1"/><path d="M1 9.5 H5 M1 12 H5 M1 14.5 H5" stroke="#1E1E1E" stroke-width="1.1"/></svg>
<svg class="a" style="left:1568px;top:103px" width="16" height="15" viewBox="0 0 16 15"><path d="M7 5 V0.6 H13 L15.2 2.8 V10 H11" fill="#fff" stroke="#1E1E1E" stroke-width="1.1"/><path d="M9 3.5 H13 M9 5.5 H13.5 M9 7.5 H13.5" stroke="#1E1E1E"/><circle cx="5" cy="8" r="2.6" fill="#CCD5F0" stroke="#1E1E1E" stroke-width="1.1"/><path d="M0.8 14.5 C1.2 11.8 2.8 10.8 5 10.8 C7.2 10.8 8.8 11.8 9.2 14.5" fill="#C2C9DD" stroke="#1E1E1E" stroke-width="1.1"/></svg>
<svg class="a" style="left:1591px;top:103px" width="15" height="15" viewBox="0 0 15 15"><rect x="0.6" y="1.6" width="9" height="10.5" fill="#C2C9DD" stroke="#1E1E1E" stroke-width="1.1"/><path d="M2.5 4 H7.5 M2.5 6.5 H6 M2.5 9 H5" stroke="#1E1E1E"/><path d="M6.5 13.5 L13.5 5.3" stroke="#1F6FC4" stroke-width="2.2" stroke-linecap="round"/></svg>
<svg class="a" style="left:1612px;top:103px" width="16" height="15" viewBox="0 0 16 15"><rect x="6" y="0.6" width="9.3" height="10.3" fill="#C2C9DD" stroke="#1E1E1E" stroke-width="1.1"/><path d="M8 3.3 H13 M9.5 5.5 H13 M11 7.7 H13" stroke="#1E1E1E"/><path d="M0.5 6.5 H8.5 L5.7 9.8 V14.3 H3.3 V9.8 Z" fill="#CCE0FA" stroke="#1F6FC4" stroke-width="1.2"/></svg>
<div class="a" style="left:1260px;top:124px;width:653px;height:23px;background:#F9FAFE;border-top:1px solid #8E97B3;border-bottom:1px solid #8E97B3"></div>
<div class="t" style="left:1265px;top:128px;font-size:12px;color:#717171">搜索解决方案资源管理器(Ctrl+;)</div>
<svg class="a" style="left:1884px;top:128px" width="13" height="13" viewBox="0 0 13 13"><circle cx="8" cy="5" r="3.6" fill="none" stroke="#555" stroke-width="1.6"/><path d="M5.5 7.5 L1.3 11.7" stroke="#555" stroke-width="2.2" stroke-linecap="round"/></svg>
<div class="a" style="left:1900px;top:125px;width:1px;height:21px;background:#8E97B3"></div>
<div class="dd" style="left:1903px;top:134px;border-left-width:3.5px;border-right-width:3.5px;border-top-width:4px"></div>
<div class="a" style="left:1260px;top:147px;width:653px;height:1px;background:#CCD5F0"></div>
<div class="a" style="left:1260px;top:148px;width:653px;height:670px;background:#F5F7FD;overflow:hidden">
<div class="a" style="left:0px;top:122px;width:636px;height:20px;background:#E3E6F0"></div>
<svg class="a" style="left:10px;top:8px" width="8" height="7" viewBox="0 0 8 7"><path d="M7.5 0 V6.8 H0.2 Z" fill="#1E1E1E"/></svg>
<svg class="a" style="left:32px;top:3px" width="17" height="17" viewBox="0 0 17 17"><rect x="0.5" y="0.5" width="13" height="12" fill="#fff" stroke="#6A7590"/><rect x="1" y="1" width="12" height="2" fill="#5B8FD8"/><circle cx="10.5" cy="11" r="5" fill="#D9D2E8" stroke="#6A6A7A" stroke-width=".8"/><path d="M10.5 6 A5 5 0 0 1 15.5 11 L10.5 11 Z" fill="#E8D27A"/><path d="M5.5 11 A5 5 0 0 0 10.5 16 L10.5 11 Z" fill="#8FC4E8"/><circle cx="10.5" cy="11" r="1.2" fill="#fff" stroke="#666" stroke-width=".5"/></svg>
<div class="t" style="left:53px;top:3px;font-size:13px">记事本</div>
<svg class="a" style="left:50px;top:26px" width="15" height="12"><use href="#ifold"/></svg>
<div class="t" style="left:71px;top:24px">Detected Dependencies</div>
<svg class="a" style="left:52px;top:45px" width="12" height="15"><use href="#ifile"/></svg>
<div class="t" style="left:71px;top:44px">application.Build.CppClean.log</div>
<svg class="a" style="left:52px;top:65px" width="12" height="15"><use href="#ifile"/></svg>
<div class="t" style="left:71px;top:64px">application.exe.recipe</div>
<svg class="a" style="left:52px;top:85px" width="12" height="15"><use href="#ifile"/></svg>
<div class="t" style="left:71px;top:84px">application.exe</div>
<svg class="a" style="left:52px;top:105px" width="12" height="15"><use href="#ifile"/></svg>
<div class="t" style="left:71px;top:104px">application.ilk</div>
<svg class="a" style="left:52px;top:125px" width="12" height="15"><use href="#ifile"/></svg>
<div class="t" style="left:71px;top:124px">application.log</div>
<svg class="a" style="left:52px;top:145px" width="12" height="15"><use href="#ifile"/></svg>
<div class="t" style="left:71px;top:144px">application.pdb</div>
<svg class="a" style="left:52px;top:165px" width="12" height="15"><use href="#ifile"/></svg>
<div class="t" style="left:71px;top:164px">application.vcxproj.FileListAbsolute.txt</div>
<svg class="a" style="left:52px;top:185px" width="12" height="15"><use href="#ifile"/></svg>
<div class="t" style="left:71px;top:184px">D3Dcompiler_47.dll</div>
<svg class="a" style="left:52px;top:205px" width="12" height="15"><use href="#ifile"/></svg>
<div class="t" style="left:71px;top:204px">libEGLd.dll</div>
<svg class="a" style="left:52px;top:225px" width="12" height="15"><use href="#ifile"/></svg>
<div class="t" style="left:71px;top:224px">libGLESv2d.dll</div>
<svg class="a" style="left:52px;top:245px" width="12" height="15"><use href="#ifile"/></svg>
<div class="t" style="left:71px;top:244px">main.obj</div>
<svg class="a" style="left:52px;top:265px" width="12" height="15"><use href="#ifile"/></svg>
<div class="t" style="left:71px;top:264px">mainwindow.obj</div>
<svg class="a" style="left:52px;top:285px" width="12" height="15"><use href="#ifile"/></svg>
<div class="t" style="left:71px;top:284px">moc_mainwindow.cpp</div>
<svg class="a" style="left:52px;top:305px" width="12" height="15"><use href="#ifile"/></svg>
<div class="t" style="left:71px;top:304px">moc_mainwindow.obj</div>
<svg class="a" style="left:52px;top:325px" width="12" height="15"><use href="#ifile"/></svg>
<div class="t" style="left:71px;top:324px">moc_predefs.h.cbt</div>
<svg class="a" style="left:52px;top:345px" width="12" height="15"><use href="#ifile"/></svg>
<div class="t" style="left:71px;top:344px">moc_predefs.h</div>
<svg class="a" style="left:52px;top:365px" width="12" height="15"><use href="#ifile"/></svg>
<div class="t" style="left:71px;top:364px">opengl32sw.dll</div>
<svg class="a" style="left:52px;top:385px" width="12" height="15"><use href="#ifile"/></svg>
<div class="t" style="left:71px;top:384px">qgifd.dll</div>
<svg class="a" style="left:52px;top:405px" width="12" height="15"><use href="#ifile"/></svg>
<div class="t" style="left:71px;top:404px">qicnsd.dll</div>
<svg class="a" style="left:52px;top:425px" width="12" height="15"><use href="#ifile"/></svg>
<div class="t" style="left:71px;top:424px">qicod.dll</div>
<svg class="a" style="left:52px;top:445px" width="12" height="15"><use href="#ifile"/></svg>
<div class="t" style="left:71px;top:444px">qjpegd.dll</div>
<svg class="a" style="left:52px;top:465px" width="12" height="15"><use href="#ifile"/></svg>
<div class="t" style="left:71px;top:464px">qrc_application.cpp</div>
<svg class="a" style="left:52px;top:485px" width="12" height="15"><use href="#ifile"/></svg>
<div class="t" style="left:71px;top:484px">qrc_application.obj</div>
<svg class="a" style="left:52px;top:505px" width="12" height="15"><use href="#ifile"/></svg>
<div class="t" style="left:71px;top:504px">qsvgd.dll</div>
<svg class="a" style="left:52px;top:525px" width="12" height="15"><use href="#ifile"/></svg>
<div class="t" style="left:71px;top:524px">qsvgicond.dll</div>
<svg class="a" style="left:52px;top:545px" width="12" height="15"><use href="#ifile"/></svg>
<div class="t" style="left:71px;top:544px">qt.natvis</div>
<svg class="a" style="left:52px;top:565px" width="12" height="15"><use href="#ifile"/></svg>
<div class="t" style="left:71px;top:564px">Qt5Cored.dll</div>
<svg class="a" style="left:52px;top:585px" width="12" height="15"><use href="#ifile"/></svg>
<div class="t" style="left:71px;top:584px">Qt5Guid.dll</div>
<svg class="a" style="left:52px;top:605px" width="12" height="15"><use href="#ifile"/></svg>
<div class="t" style="left:71px;top:604px">Qt5Svgd.dll</div>
<svg class="a" style="left:52px;top:625px" width="12" height="15"><use href="#ifile"/></svg>
<div class="t" style="left:71px;top:624px">Qt5Widgetsd.dll</div>
<svg class="a" style="left:52px;top:645px" width="12" height="15"><use href="#ifile"/></svg>
<div class="t" style="left:71px;top:644px">qt_ar.qm</div>
<svg class="a" style="left:52px;top:665px" width="12" height="15"><use href="#ifile"/></svg>
<div class="t" style="left:71px;top:664px">qt_bg.qm</div>
<div class="sb" style="left:636px;top:0px;width:17px;height:670px"></div>
<div class="thumb" style="left:640px;top:81px;width:9px;height:304px"></div>
<div class="upar" style="left:640px;top:6px;border-left-width:4.5px;border-right-width:4.5px;border-bottom-width:5px"></div>
<div class="dnar" style="left:640px;top:658px;border-left-width:4.5px;border-right-width:4.5px;border-top-width:5px"></div>
</div>
<svg class="a" style="left:1796px;top:118px" width="52" height="58" viewBox="0 0 52 58"><path d="M25.5 1 L50 14.8 V42.8 L25.5 56.5 L1 42.8 V14.8 Z" fill="#4A8AF0" stroke="#7FAEF6" stroke-width="1"/><path d="M25.5 1 L50 14.8 V28 L25.5 28.5 Z" fill="#5E9CF5"/><path d="M50 28 V42.8 L38 49.5 L30 36 Z" fill="#5896F3"/><path d="M7.7 16.8 C11 16.6 14 17.2 16 18.6 L21.5 22.2 L41.1 11.9 L34.4 28.4 L43.8 32.9 L29.5 35.6 L34 49 C28 45 23 42 20 38.5 C16 34 14.5 29 14.4 25 C14 21.5 12 19 7.7 16.8 Z" fill="#EEF4FF"/></svg>
<div class="a" style="left:1260px;top:818px;width:117px;height:20px;background:#F5F7FD"></div>
<div class="t" style="left:1265px;top:820px;font-size:12px;color:#1E1E1E">解决方案资源管理器</div>
<div class="a" style="left:1379px;top:818px;width:55px;height:18px;background:#40568D"></div>
<div class="t" style="left:1385px;top:819px;font-size:12px;color:#DCE3F7"><span style="font-size:13px">Git</span> 更改</div>
<div class="ttl" style="left:1260px;top:846px;width:653px;height:23px"></div>
<div class="t" style="left:1264px;top:850px;font-size:12px;color:#fff">属性</div>
<div class="dd" style="left:1861px;top:856px;border-top-color:#C9D1EA;border-left-width:4px;border-right-width:4px;border-top-width:4px"></div>
<svg class="a" style="left:1878px;top:851px" width="10" height="13" viewBox="0 0 10 13"><path d="M2.5 0.5 H7.5 M3.5 0.5 V7 M6.5 0.5 V7 M1 7.5 H9 M5 7.5 V12.5" fill="none" stroke="#C9D1EA" stroke-width="1"/></svg>
<svg class="a" style="left:1895px;top:852px" width="10" height="10" viewBox="0 0 10 10"><path d="M1 1 L9 9 M9 1 L1 9" stroke="#C9D1EA" stroke-width="1.5"/></svg>
<div class="a" style="left:1260px;top:869px;width:653px;height:131px;background:#F5F7FD"></div>
<div class="a" style="left:1260px;top:869px;width:653px;height:25px;background:#F2F4FB"></div>
<div class="t" style="left:1266px;top:873px;font-weight:bold">application.exe</div>
<div class="t" style="left:1365px;top:873px">File Installation Properties</div>
<div class="dd" style="left:1903px;top:880px;border-left-width:3.5px;border-right-width:3.5px;border-top-width:4px"></div>
<div class="tb" style="left:1261px;top:894px;width:651px;height:25px"></div>
<svg class="a" style="left:1267px;top:899px" width="15" height="14" viewBox="0 0 15 14"><rect x="0" y="0" width="5" height="5" fill="#1E1E1E"/><rect x="0" y="9" width="5" height="5" fill="#1E1E1E"/><path d="M1 2.5 H4 M2.5 1 V4 M1 11.5 H4 M2.5 10 V13" stroke="#fff" stroke-width=".9"/><path d="M7 1 H13 M7 3 H14 M7 5.5 H13 M7 9.5 H13 M7 12 H11 M13 12.5 H14" stroke="#1E1E1E" stroke-width="1"/></svg>
<div class="a" style="left:1286px;top:895px;width:23px;height:22px;background:#FCEDC6;border:1px solid #D5B26E"></div>
<svg class="a" style="left:1290px;top:898px" width="15" height="15" viewBox="0 0 15 15"><rect x="0.5" y="0.5" width="6" height="6.5" fill="#474747"/><text x="1.2" y="6.3" font-size="6.5" font-family="Liberation Sans" font-weight="bold" fill="#fff">A</text><text x="0.8" y="14.3" font-size="7.5" font-family="Liberation Sans" font-weight="bold" fill="#474747">Z</text><path d="M11 3 V12 M8 9 L11 12.3 L14 9" fill="none" stroke="#1F6FC4" stroke-width="1.8"/></svg>
<div class="a" style="left:1312px;top:897px;width:1px;height:19px;background:#A6B1D2"></div>
<svg class="a" style="left:1319px;top:899px" width="15" height="15" viewBox="0 0 15 15"><path d="M1.5 13.5 L7.5 7.5" stroke="#8A8E98" stroke-width="2.6" stroke-linecap="round"/><path d="M6.8 8.2 C5.3 5.5 6.5 2 10 1 L9.3 4.3 L10.7 5.7 L14 5 C13 8.5 9.5 9.7 6.8 8.2 Z" fill="#8A8E98"/></svg>
<div class="a" style="left:1261px;top:920px;width:312px;height:18px;background:#EEF0F5"></div>
<div class="a" style="left:1573px;top:920px;width:322px;height:18px;background:#F8F9FD"></div>
<div class="a" style="left:1261px;top:938px;width:634px;height:1px;background:#E4E7EF"></div>
<div class="t" style="left:1279px;top:923px">Condition</div>
<div class="a" style="left:1895px;top:920px;width:17px;height:19px;background:#E8E8EC"></div>
<div class="upar" style="left:1900px;top:926px;border-left-width:4px;border-right-width:4px;border-bottom-width:4px"></div>
<div class="dnar" style="left:1899px;top:934px;border-left-width:5px;border-right-width:5px;border-top-width:4px"></div>
<div class="t" style="left:1266px;top:946px;font-weight:bold">Condition</div>
<div class="t" style="left:1266px;top:964px">Specifies a Windows Installer condition that must be satisfied (evaluate to true) in order for the selected ite...</div>
<!-- CONTEXT MENU -->
<div class="a" style="left:540px;top:265px;width:327px;height:169px;background:rgba(70,80,105,.55);filter:blur(1px)"></div>
<div class="a" style="left:536px;top:261px;width:328px;height:170px;background:#E8EDFB;border:1px solid #9AA3C0"></div>
<svg class="a" style="left:544px;top:268px" width="14" height="12" viewBox="0 0 14 12"><path d="M5 11.8 C1.8 11.6 0.3 9 1 6.8 C1.6 5 3 4.3 5 4.3 H12.8 M10.2 1.6 L12.9 4.3 L10.2 7" fill="none" stroke="#1F6FC4" stroke-width="1.1"/></svg>
<div class="t" style="left:571px;top:268px;font-size:12px">打开(O)</div>
<div class="a" style="left:567px;top:288px;width:293px;height:1px;background:#BEC6DC"></div>
<div class="t" style="left:571px;top:295px">Create Shortcut to application.exe</div>
<div class="a" style="left:567px;top:315px;width:293px;height:1px;background:#BEC6DC"></div>
<svg class="a" style="left:545px;top:322px" width="11" height="14" viewBox="0 0 11 14"><path d="M2.5 0.5 L8 11 M8.5 0.5 L3 11" stroke="#1E1E1E" stroke-width="1"/><circle cx="2.3" cy="11.8" r="1.5" fill="none" stroke="#1E1E1E"/><circle cx="8.7" cy="11.8" r="1.5" fill="none" stroke="#1E1E1E"/></svg>
<div class="t" style="left:571px;top:322px;font-size:12px">剪切(T)</div>
<div class="t" style="left:806px;top:322px">Ctrl+X</div>
<svg class="a" style="left:544px;top:343px" width="14" height="15" viewBox="0 0 14 15"><path d="M1 2.5 H4 V1 H8 V2.5 H11 V7" fill="none" stroke="#B9BFCC"/><rect x="5.5" y="7.5" width="8" height="7" fill="none" stroke="#B9BFCC"/><path d="M1 2.5 V13 H5" fill="none" stroke="#B9BFCC"/></svg>
<div class="t" style="left:571px;top:344px;font-size:12px;color:#9BA1B1">粘贴(P)</div>
<div class="t" style="left:806px;top:344px;color:#9BA1B1">Ctrl+V</div>
<svg class="a" style="left:543px;top:366px" width="16" height="13" viewBox="0 0 16 13"><path d="M10 3.5 H1 V9.5 H10 M13 3.5 H15 V9.5 H13" fill="none" stroke="#1E1E1E"/><path d="M11.5 1 V12 M10 0.5 H13 M10 12.5 H13" fill="none" stroke="#1E1E1E"/><rect x="3" y="5.5" width="4" height="2" fill="#1E1E1E"/></svg>
<div class="t" style="left:571px;top:366px;font-size:12px">重命名(M)</div>
<svg class="a" style="left:544px;top:388px" width="13" height="13" viewBox="0 0 13 13"><path d="M1 1 L12 12 M12 1 L1 12" stroke="#E51400" stroke-width="1.3"/></svg>
<div class="t" style="left:571px;top:388px;font-size:12px">删除(D)</div>
<div class="t" style="left:806px;top:388px">Del</div>
<svg class="a" style="left:543px;top:409px" width="15" height="15" viewBox="0 0 15 15"><path d="M1.2 13.8 L7.2 7.8" stroke="#1E1E1E" stroke-width="2.4" stroke-linecap="round"/><path d="M6.5 8.5 C5 6 6 2.5 9.5 1.5 L9 4.5 L10.5 6 L13.5 5.5 C12.5 9 9 10 6.5 8.5 Z" fill="#1E1E1E"/></svg>
<div class="t" style="left:571px;top:410px;font-size:12px">属性窗口(W)</div>
<div class="t" style="left:806px;top:410px">F4</div>
</body></html>
